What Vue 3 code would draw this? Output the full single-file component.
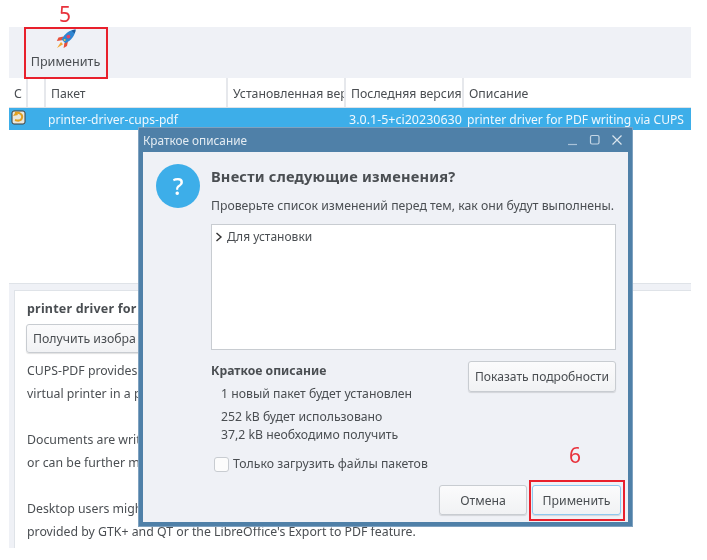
<script setup>
const cols = [
  { label: 'С', width: 19 },
  { label: '', width: 18 },
  { label: 'Пакет', width: 182 },
  { label: 'Установленная вер', width: 118 },
  { label: 'Последняя версия', width: 118 },
  { label: 'Описание', width: 227 }
]
const desc = [
  'CUPS-PDF provides',
  'virtual printer in a p',
  '',
  'Documents are writ',
  'or can be further ma',
  '',
  'Desktop users migh',
  "provided by GTK+ and QT or the LibreOffice's Export to PDF feature."
]
</script>

<template>
  <div class="page">
    <div class="app">
      <div class="toolbar">
        <button class="tool">
          <svg class="rocket" width="20" height="20" viewBox="0 0 20 20">
            <path d="M7.5 7.5 L2.5 8.5 L0.8 12 L6 11.2Z" fill="#e8503c" />
            <path d="M12 12 L11 17 L7.6 19 L8.4 14Z" fill="#e8503c" />
            <path d="M5 13 L1 19 L7 15.2Z" fill="#f2a52e" />
            <path d="M19.6 0.4 C13.5 1 8.5 4.5 5.6 10.4 L9.4 14.2 C15.5 11.2 19 6.4 19.6 0.4Z" fill="#2f86d2" />
            <path d="M15.4 1.5 C17 1 18.5 0.6 19.6 0.4 C19.5 1.6 19.2 3 18.6 4.6Z" fill="#1e5e9e" />
            <circle cx="12.4" cy="7.6" r="1.9" fill="#e2476a" />
            <circle cx="8.6" cy="11" r="1" fill="#f2c63c" />
          </svg>
          <span>Применить</span>
        </button>
      </div>
      <div class="thead">
        <div v-for="(c, i) in cols" :key="i" class="th" :style="{ width: c.width + 'px' }">{{ c.label }}</div>
      </div>
      <div class="row">
        <div class="cell status">
          <svg width="15" height="15" viewBox="0 0 15 15">
            <rect x="1" y="1" width="13" height="13" rx="2" fill="#e8e8e0" stroke="#3e3e38" stroke-width="1" />
            <path d="M4 3 C9 2 12 5 11 8 C10 11 7 11 4 10" fill="none" stroke="#e2a020" stroke-width="2" />
            <path d="M2 6 L5 1.5 L7 5Z" fill="#e2a020" />
          </svg>
        </div>
        <div class="cell name">printer-driver-cups-pdf</div>
        <div class="cell inst"></div>
        <div class="cell last">3.0.1-5+ci20230630</div>
        <div class="cell descr">printer driver for PDF writing via CUPS</div>
      </div>
      <div class="list"></div>
      <div class="details">
        <div class="panel">
          <div class="title">printer driver for</div>
          <button class="btn shot">Получить изобра</button>
          <div class="text">
            <div v-for="(l, i) in desc" :key="i" class="line">{{ l }}</div>
          </div>
        </div>
      </div>
    </div>

    <div class="dialog">
      <div class="titlebar">
        <span class="wtitle">Краткое описание</span>
        <div class="wbtns">
          <svg width="12" height="12" viewBox="0 0 12 12"><path d="M1 10.5H10" stroke="#a9c2d8" stroke-width="1.2" /></svg>
          <svg width="12" height="12" viewBox="0 0 12 12"><rect x="1.5" y="1.5" width="8.5" height="8.5" rx="1.5" fill="none" stroke="#c5d6e5" stroke-width="1.2" /></svg>
          <svg width="12" height="12" viewBox="0 0 12 12"><path d="M1.5 1.5L10.5 10.5M10.5 1.5L1.5 10.5" stroke="#dbe5ee" stroke-width="1.2" /></svg>
        </div>
      </div>
      <div class="dbody">
        <div class="dhead">
          <div class="qicon">?</div>
          <div class="dhtext">
            <div class="dtitle">Внести следующие изменения?</div>
            <div class="dsub">Проверьте список изменений перед тем, как они будут выполнены.</div>
          </div>
        </div>
        <div class="changes">
          <svg width="8" height="10" viewBox="0 0 8 10"><path d="M1.5 1L6 5L1.5 9" fill="none" stroke="#333" stroke-width="1.4" /></svg>
          <span>Для установки</span>
        </div>
        <div class="summary">
          <div class="sumleft">
            <div class="sumtitle">Краткое описание</div>
            <div class="sline first">1 новый пакет будет установлен</div>
            <div class="sline second">252 kB будет использовано</div>
            <div class="sline">37,2 kB необходимо получить</div>
            <label class="check"><span class="box"></span>Только загрузить файлы пакетов</label>
          </div>
          <button class="btn more">Показать подробности</button>
        </div>
        <div class="actions">
          <button class="btn act cancel">Отмена</button>
          <button class="btn act primary">Применить</button>
        </div>
      </div>
    </div>

    <div class="note n5">5</div>
    <div class="mark m5"></div>
    <div class="note n6">6</div>
    <div class="mark m6"></div>
  </div>
</template>

<style scoped>
.page {
  position: relative;
  width: 707px;
  height: 560px;
  overflow: hidden;
  background: #fff;
  font-family: "Noto Sans", "Open Sans", sans-serif;
  font-size: 12.25px;
  color: #4a4e52;
  filter: blur(0.5px);
}
button { font: inherit; color: inherit; }
.app {
  width: 682px;
  margin-left: 9px;
  padding-top: 27px;
  display: flex;
  flex-direction: column;
  height: 521px;
}
.toolbar {
  height: 51px;
  background: #eff1f6;
  display: flex;
  padding-left: 15px;
}
.tool {
  width: 83px;
  border: 0;
  background: transparent;
  padding: 2px 0 0;
  display: flex;
  flex-direction: column;
  align-items: center;
  justify-content: flex-start;
  gap: 4px;
  line-height: 17px;
  font-size: 12.6px;
}
.rocket { display: block; flex: none; }
.thead {
  display: flex;
  height: 29px;
  background: #fff;
  border-bottom: 1px solid #dfe3e8;
}
.th {
  box-sizing: border-box;
  border-right: 2px solid #e6e8ec;
  padding-left: 5px;
  line-height: 31px;
  white-space: nowrap;
  overflow: hidden;
  font-size: 12.3px;
}
.th:last-child { border-right: 0; }
.row {
  height: 22px;
  background: #3daee9;
  color: #f0f8fd;
  display: flex;
  line-height: 24px;
  font-size: 12.1px;
}
.cell { white-space: nowrap; }
.status { width: 36px; padding: 2px 0 0 2px; box-sizing: border-box; }
.status svg { display: block; }
.name { width: 182px; padding-left: 3px; box-sizing: border-box; }
.inst { width: 122px; }
.last { width: 118px; font-size: 12.5px; }
.descr { flex: 1; }
.list { height: 153px; background: #fff; }
.details {
  flex: 1;
  min-height: 0;
  background: #eff1f6;
  padding: 6px 0 0 5px;
  border-top: 1px solid #dfe3e8;
  display: flex;
}
.panel {
  flex: 1;
  background: #fff;
  border-left: 1px solid #dfe3e8;
  border-top: 1px solid #dfe3e8;
  padding: 9px 12px 0;
  overflow: hidden;
}
.title {
  font-weight: 700;
  font-size: 12.5px;
  line-height: 18px;
  white-space: nowrap;
  letter-spacing: 0.2px;
}
.btn {
  border: 1px solid #c8ccd1;
  border-radius: 3px;
  background: linear-gradient(#fbfbfc, #f1f2f4);
  box-shadow: 0 1px 1px rgba(0, 0, 0, 0.12);
  padding: 0;
}
.shot {
  display: block;
  margin: 6px 0 0 -1px;
  width: 170px;
  height: 29px;
  text-align: left;
  padding-left: 6px;
  font-size: 12.3px;
}
.text { margin-top: 6px; }
.line { height: 23px; line-height: 23px; white-space: nowrap; font-size: 12.3px; }
.dialog {
  position: absolute;
  left: 138px;
  top: 127px;
  width: 495px;
  height: 400px;
  box-sizing: border-box;
  background: #4f80a8;
  border: 1px solid #7fa2c0;
  padding: 0 4px 4px;
  display: flex;
  flex-direction: column;
}
.titlebar {
  height: 24px;
  flex: none;
  display: flex;
  align-items: center;
  justify-content: space-between;
  color: #e3ebf2;
  font-size: 11.8px;
  padding: 0 3px 0 0;
}
.wbtns { display: flex; gap: 10px; padding-right: 2px; }
.wbtns svg { display: block; }
.dbody {
  flex: 1;
  background: #eff1f6;
  padding: 12px 12px 0 13px;
  display: flex;
  flex-direction: column;
  min-height: 0;
}
.dhead { display: flex; gap: 11px; height: 60px; }
.qicon {
  width: 44px;
  height: 44px;
  border-radius: 50%;
  background: #3daee9;
  color: #fff;
  font-size: 24px;
  font-weight: 500;
  line-height: 44px;
  text-align: center;
  flex: none;
}
.dtitle {
  font-weight: 700;
  font-size: 14.6px;
  line-height: 20px;
  margin-top: 2px;
  white-space: nowrap;
  letter-spacing: 0.2px;
}
.dsub { margin-top: 11px; line-height: 18px; white-space: nowrap; font-size: 12.26px; }
.changes {
  margin-left: 55px;
  height: 126px;
  flex: none;
  box-sizing: border-box;
  background: #fff;
  border: 1px solid #c8ccd1;
  padding: 3px 0 0 3px;
  display: flex;
  align-items: flex-start;
  gap: 4px;
  line-height: 18px;
  font-size: 12px;
}
.changes svg { margin-top: 4px; }
.summary {
  margin-left: 55px;
  display: flex;
  justify-content: space-between;
  align-items: flex-start;
  margin-top: 11px;
  position: relative;
}
.sumleft { display: flex; flex-direction: column; }
.sumtitle { font-weight: 700; line-height: 18px; margin: 1px 0 5px; font-size: 12.2px; }
.sline { padding-left: 10px; line-height: 18px; white-space: nowrap; }
.sline.first { margin-bottom: 5px; }
.check { display: flex; align-items: center; gap: 4px; margin-top: 10px; margin-left: 3px; line-height: 20px; white-space: nowrap; }
.box {
  width: 13px;
  height: 13px;
  border: 1px solid #c8ccd1;
  border-radius: 3px;
  background: #fcfcfc;
}
.more { width: 148px; height: 31px; font-size: 12.1px; }
.actions {
  margin: auto -5px 7px 0;
  display: flex;
  justify-content: flex-end;
  gap: 5px;
}
.act { width: 89px; height: 30px; font-size: 12.3px; }
.cancel { width: 88px; }
.primary { border-color: #8ec8ef; }
.note {
  position: absolute;
  color: #e8323c;
  font-size: 21px;
  line-height: 24px;
}
.n5 { left: 59px; top: 2px; }
.n6 { left: 569px; top: 443px; }
.mark {
  position: absolute;
  box-sizing: border-box;
  border: 2px solid #e8202c;
}
.m5 { left: 24px; top: 27px; width: 84px; height: 52px; }
.m6 { left: 529px; top: 480px; width: 96px; height: 41px; }
</style>
